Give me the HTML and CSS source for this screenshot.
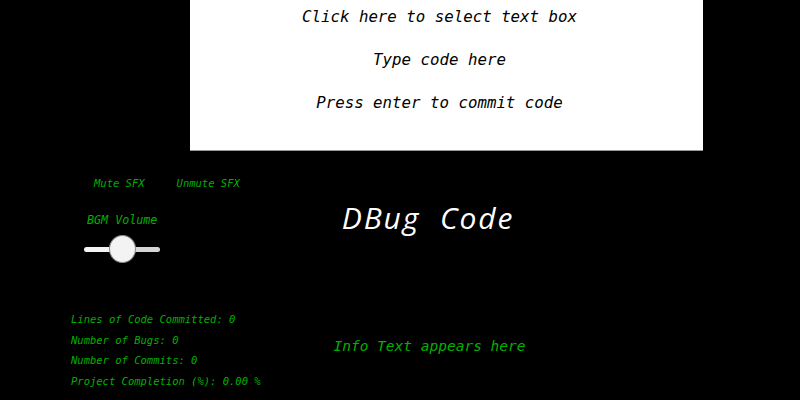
FILE: index.html
```html
<!DOCTYPE html>
<html>
<head>
<meta charset="utf-8">
<link rel="stylesheet" href="styles.css">
</head>
<body>
<div class="code-box">
  <p class="hint">Click here to select text box</p>
  <p class="hint">Type code here</p>
  <p class="hint">Press enter to commit code</p>
</div>
<div class="main">
  <div class="side">
    <div class="sfx">
      <span class="sfx-btn">Mute SFX</span>
      <span class="sfx-btn">Unmute SFX</span>
    </div>
    <div class="bgm-label">BGM Volume</div>
    <input class="slider" type="range" min="0" max="100" value="50">
    <div class="stats">
      <div>Lines of Code Committed: 0</div>
      <div>Number of Bugs: 0</div>
      <div>Number of Commits: 0</div>
      <div>Project Completion (%): 0.00 %</div>
    </div>
  </div>
  <div class="center">
    <h1 class="title">DBug Code</h1>
    <div class="info">Info Text appears here</div>
  </div>
</div>
</body>
</html>
```

FILE: styles.css
```css
html, body {
  margin: 0;
  padding: 0;
  background: #000;
  width: 800px;
  height: 400px;
  overflow: hidden;
}
body {
  font-family: "DejaVu Sans Mono", monospace;
  font-style: italic;
}
.code-box {
  margin-left: 190px;
  width: 513px;
  height: 151px;
  background: #fff;
  border-bottom: 1px solid #9a9a9a;
  box-sizing: border-box;
  display: flex;
  flex-direction: column;
  align-items: center;
  padding: 7px 14px 0 0;
  gap: 23px;
}
.hint {
  margin: 0;
  font-size: 15.75px;
  line-height: 20px;
  color: #000;
}
.main {
  display: flex;
}
.side {
  width: 280px;
  display: flex;
  flex-direction: column;
  align-items: flex-start;
  color: #00b000;
}
.sfx {
  display: flex;
  gap: 32px;
  margin-top: 25px;
  margin-left: 94px;
  font-size: 10.5px;
  line-height: 14px;
}
.bgm-label {
  margin-top: 23px;
  margin-left: 87px;
  font-size: 11.7px;
  line-height: 14px;
}
.slider {
  -webkit-appearance: none;
  appearance: none;
  margin: 8px 0 0 84px;
  padding: 0;
  width: 76px;
  height: 28px;
  background: transparent;
}
.slider::-webkit-slider-runnable-track {
  height: 5px;
  border-radius: 3px;
  background: linear-gradient(to right, #f4f4f4 0 50%, #d4d4d4 50% 100%);
}
.slider::-webkit-slider-thumb {
  -webkit-appearance: none;
  width: 27px;
  height: 28px;
  margin-top: -11.5px;
  border-radius: 50%;
  background: #f3f3f3;
  border: 1px solid #888;
  box-sizing: border-box;
}
.stats {
  margin-top: 46px;
  margin-left: 71px;
  font-size: 10.5px;
  line-height: 20.5px;
}
.center {
  width: 296px;
  display: flex;
  flex-direction: column;
  align-items: center;
}
.title {
  margin: 47px 0 0;
  font-family: "Open Sans", sans-serif;
  font-weight: normal;
  font-style: italic;
  font-size: 30px;
  line-height: 40px;
  color: #fff;
  letter-spacing: 1.9px;
  word-spacing: 10px;
}
.info {
  margin-top: 98px;
  padding-left: 3px;
  font-size: 14.5px;
  line-height: 20px;
  color: #00b000;
}
```
